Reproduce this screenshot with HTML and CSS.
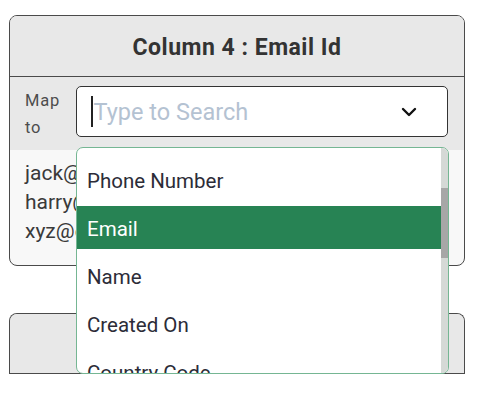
FILE: index.html
```html
<!DOCTYPE html>
<html lang="en">
<head>
    <meta charset="UTF-8">
    <meta name="viewport" content="width=device-width, initial-scale=1.0">
    <title>Column Mapping</title>
    <link rel="stylesheet" href="styles.css">
</head>
<body>
    <div class="mapping-list">
        <div class="column-card">
            <div class="card-head">Column 4 : Email Id</div>
            <div class="map-row">
                <label class="map-label">Map<br>to</label>
                <div class="select">
                    <div class="select-input">
                        <span class="caret"></span>
                        <span class="placeholder">Type to Search</span>
                        <svg class="chevron" width="16" height="10" viewBox="0 0 16 10">
                            <path d="M2 2 L8 8 L14 2" fill="none" stroke="#111" stroke-width="2.4" stroke-linecap="round" stroke-linejoin="round"/>
                        </svg>
                    </div>

                    <div class="dropdown">
                        <ul class="options">
                            <li class="option">Phone Number</li>
                            <li class="option active">Email</li>
                            <li class="option">Name</li>
                            <li class="option">Created On</li>
                            <li class="option">Country Code</li>
                        </ul>
                        <div class="scroll-track">
                            <div class="scroll-thumb"></div>
                        </div>
                    </div>
                </div>
            </div>
            <div class="card-body">
                <div class="value">jack@example.com</div>
                <div class="value">harry@example.com</div>
                <div class="value">xyz@example.com</div>
            </div>
        </div>

        <div class="column-card next">
            <div class="card-head">Column 5 : Phone</div>
        </div>
    </div>
</body>
</html>
```

FILE: styles.css
```css
* {
    margin: 0;
    padding: 0;
    box-sizing: border-box;
}

body {
    font-family: Roboto, "Liberation Sans", sans-serif;
    background: #fff;
    color: #333;
    min-height: 397px;
}

.mapping-list {
    display: flex;
    flex-direction: column;
    gap: 47px;
    padding: 15px 0 0 9px;
    width: 465px;
}

.column-card {
    border: 1.5px solid #4a4a4a;
    border-radius: 8px;
    background: #f8f8f8;
}

.card-head {
    height: 61px;
    padding-top: 3px;
    display: flex;
    align-items: center;
    justify-content: center;
    background: #e8e8e8;
    border-bottom: 1.5px solid #4a4a4a;
    border-radius: 7px 7px 0 0;
    font-size: 23px;
    font-weight: 700;
    letter-spacing: 0.5px;
    color: #333;
}

.column-card.next {
    border-bottom: none;
    border-radius: 8px 8px 0 0;
    background: #e8e8e8;
}

.column-card.next .card-head {
    height: 60px;
}

.map-row {
    display: flex;
    gap: 14px;
    height: 73px;
    padding: 9px 16px 0 15px;
    background: #e8e8e8;
}

.map-label {
    width: 37px;
    padding-top: 1px;
    font-size: 16.5px;
    line-height: 27px;
    letter-spacing: 0.8px;
    color: #4d4d4d;
}

.select {
    position: relative;
    flex: 1;
}

.select-input {
    display: flex;
    align-items: center;
    height: 51px;
    padding: 0 30px 0 14px;
    background: #fff;
    border: 1.5px solid #333;
    border-radius: 5px;
}

.caret {
    width: 1.5px;
    height: 31px;
    margin-right: 1px;
    background: #222;
}

.placeholder {
    flex: 1;
    font-size: 23.5px;
    color: #b4c2d2;
}

.dropdown {
    position: absolute;
    top: 61px;
    left: 0;
    width: 373px;
    height: 227px;
    background: #fff;
    border: 1.5px solid #75b693;
    border-radius: 7px;
    overflow: hidden;
    display: flex;
    z-index: 2;
}

.options {
    list-style: none;
    flex: 1;
    padding-top: 10px;
}

.option {
    height: 43px;
    margin-bottom: 5px;
    padding: 3px 0 0 10px;
    display: flex;
    align-items: center;
    font-size: 20.5px;
    color: #2c2c38;
}

.option.active {
    background: #278354;
    color: #fff;
}

.scroll-track {
    width: 7px;
    background: #d5d9d6;
    padding-top: 40px;
}

.scroll-thumb {
    height: 70px;
    background: #a7a7a7;
}

.card-body {
    padding: 9px 15px 19px;
}

.value {
    font-size: 21px;
    line-height: 29px;
    color: #3a3a3a;
}
```
